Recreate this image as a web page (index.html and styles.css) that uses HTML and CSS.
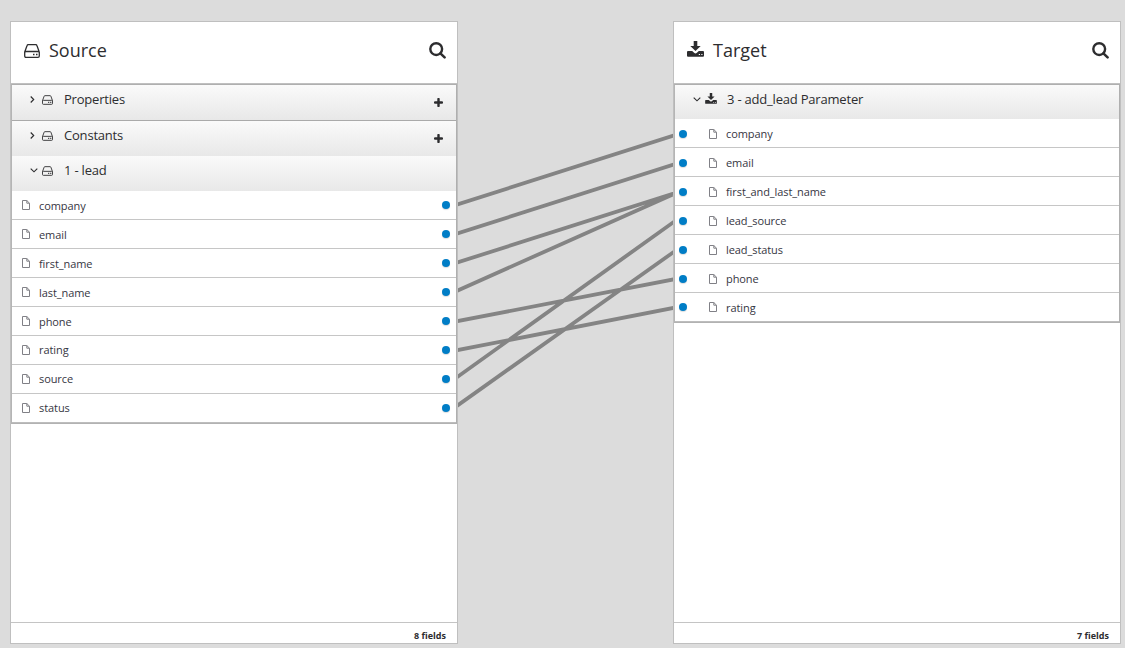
FILE: index.html
```html
<!DOCTYPE html>
<html lang="en">
<head>
<meta charset="utf-8">
<title>Data Mapper</title>
<link rel="stylesheet" href="styles.css">
</head>
<body>
<svg class="defs" aria-hidden="true">
  <symbol id="hdd" viewBox="0 0 16 14"><path d="M.7 8 3 1.700Q3.300.700 4.300.700h7.400q1 0 1.300 1L15.300 8v4q0 1.300-1.300 1.300H2Q.700 13.300.700 12zM.700 8.100Q1 7.500 2 7.500H14q1 0 1.300.600" fill="none" stroke="currentColor" stroke-width="1.300"/><path d="M9 9.700h1.500v1.500H9zM12 9.700h1.500v1.500H12z" fill="currentColor"/></symbol>
  <symbol id="import" viewBox="0 0 17 16"><path d="M6.700 0h3.600v5h3.400L8.500 10 3.300 5h3.400z" fill="currentColor"/><path fill-rule="evenodd" d="M1 10h4.200l2.200 2q1.100.900 2.200 0l2.200-2H16q1 0 1 1v3.800q0 .900-1 .900H1q-1 0-1-.900V11q0-1 1-1zm10.800 3v1h1.200v-1zm2.500 0v1h1.200v-1z" fill="currentColor"/></symbol>
  <symbol id="search" viewBox="0 0 17 17"><circle cx="7.200" cy="7.100" r="5.900" fill="none" stroke="currentColor" stroke-width="2.400"/><path d="m11.400 11.300 4.200 4.100" stroke="currentColor" stroke-width="2.500" stroke-linecap="round"/></symbol>
  <symbol id="file" viewBox="0 0 8 10"><path d="M.500.500h4.300L7.500 3.200v6.300h-7zM4.800.500v2.700h2.700" fill="none" stroke="currentColor"/></symbol>
  <symbol id="plus" viewBox="0 0 9 9"><path d="M4.500 1v7M1 4.500h7" stroke="currentColor" stroke-width="2.400" stroke-linecap="round"/></symbol>
  <symbol id="right" viewBox="0 0 5 7"><path d="m.700.500 3 3-3 3" fill="none" stroke="currentColor" stroke-width="1.150"/></symbol>
  <symbol id="down" viewBox="0 0 8 5"><path d="m.700.700 3.300 3.100L7.300.700" fill="none" stroke="currentColor" stroke-width="1.150"/></symbol>
</svg>
<main class="mapper">
  <section class="panel">
    <header class="head"><svg class="head-icon hdd"><use href="#hdd"/></svg><h2>Source</h2><svg class="search"><use href="#search"/></svg></header>
    <div class="content"><div class="tree">
      <div class="group ruled"><svg class="right"><use href="#right"/></svg><svg class="hdd"><use href="#hdd"/></svg><span>Properties</span><svg class="plus"><use href="#plus"/></svg></div>
      <div class="group"><svg class="right"><use href="#right"/></svg><svg class="hdd"><use href="#hdd"/></svg><span>Constants</span><svg class="plus"><use href="#plus"/></svg></div>
      <div class="group lead"><svg class="down"><use href="#down"/></svg><svg class="hdd"><use href="#hdd"/></svg><span>1 - lead</span></div>
      <div class="field"><svg class="file"><use href="#file"/></svg><span>company</span><i class="dot"></i></div>
      <div class="field"><svg class="file"><use href="#file"/></svg><span>email</span><i class="dot"></i></div>
      <div class="field"><svg class="file"><use href="#file"/></svg><span>first_name</span><i class="dot"></i></div>
      <div class="field"><svg class="file"><use href="#file"/></svg><span>last_name</span><i class="dot"></i></div>
      <div class="field"><svg class="file"><use href="#file"/></svg><span>phone</span><i class="dot"></i></div>
      <div class="field raised"><svg class="file"><use href="#file"/></svg><span>rating</span><i class="dot"></i></div>
      <div class="field raised"><svg class="file"><use href="#file"/></svg><span>source</span><i class="dot"></i></div>
      <div class="field raised"><svg class="file"><use href="#file"/></svg><span>status</span><i class="dot"></i></div>
    </div></div>
    <footer>8 fields</footer>
  </section>
  <svg class="links" viewBox="458 21 215 623">
    <path d="M446 208.100 683 132.600M446 237.100 683 161.600M446 266.100 683 190.500M446 295.700 683 189.900M446 323.300 683 277.600M446 352.300 683 306.100M446 385.100 683 215.300M446 413.600 683 245.400"/>
  </svg>
  <section class="panel target">
    <header class="head"><svg class="head-icon import"><use href="#import"/></svg><h2>Target</h2><svg class="search"><use href="#search"/></svg></header>
    <div class="content"><div class="tree">
      <div class="group"><svg class="down"><use href="#down"/></svg><svg class="import"><use href="#import"/></svg><span>3 - add_lead Parameter</span></div>
      <div class="field"><i class="dot"></i><svg class="file"><use href="#file"/></svg><span>company</span></div>
      <div class="field"><i class="dot"></i><svg class="file"><use href="#file"/></svg><span>email</span></div>
      <div class="field"><i class="dot"></i><svg class="file"><use href="#file"/></svg><span>first_and_last_name</span></div>
      <div class="field"><i class="dot"></i><svg class="file"><use href="#file"/></svg><span>lead_source</span></div>
      <div class="field"><i class="dot"></i><svg class="file"><use href="#file"/></svg><span>lead_status</span></div>
      <div class="field"><i class="dot"></i><svg class="file"><use href="#file"/></svg><span>phone</span></div>
      <div class="field"><i class="dot"></i><svg class="file"><use href="#file"/></svg><span>rating</span></div>
    </div></div>
    <footer>7 fields</footer>
  </section>
</main>
</body>
</html>
```
FILE: styles.css
```css
* { box-sizing: border-box; }
body { margin: 0; background: #dcdcdc; color: #2d2d2f; font-family: "Open Sans", sans-serif; overflow: hidden; }
.defs { display: block; width: 0; height: 0; }
svg { display: block; flex: none; }
.mapper { display: flex; height: 648px; padding: 21px 4px 4px 10px; }
.panel { display: flex; flex-direction: column; width: 448px; height: 623px; background: #fff; border: 1px solid #bfbfbf; }
.head { display: flex; align-items: center; height: 62px; padding: 0 11px 4px 13px; border-bottom: 1px solid #c0c0c0; }
.head-icon.hdd { width: 16px; height: 14px; }
.head-icon.import { width: 17px; height: 16px; margin-bottom: 3px; }
h2 { margin: 0 auto 2px 9px; font-size: 18px; line-height: 24px; font-weight: 400; }
.search { width: 17px; height: 17px; }
.content { flex: 1; }
.tree { border: 1px solid #afafaf; border-left-color: #b5b5b5; border-bottom-color: #b2b2b2; }
.group { display: flex; align-items: flex-start; height: 35px; padding: 4px 13px 0 18px; font-size: 13px; line-height: 20px; letter-spacing: -.2px; background: linear-gradient(#fafafa, #e8e8e8); }
.group.ruled { height: 36px; border-bottom: 1px solid #aaa; }
.right { width: 5px; height: 7px; margin: 7px 7px 0 0; }
.down { width: 8px; height: 5px; margin: 8px 4px 0 0; }
.group .hdd { width: 11px; height: 10px; margin: 6px 11px 0 0; }
.group .plus { width: 9px; height: 9px; margin: 9px 0 0 auto; }
.field { display: flex; align-items: center; height: 29px; padding: 0 6px 0 10px; border-bottom: 1px solid #c6c6c6; color: #36363f; font-size: 11px; line-height: 20px; letter-spacing: -.08px; }
.field:last-child { border-bottom-color: #bdbdbd; }
.field span { padding-top: 1px; }
.field.raised span { padding: 0 0 1px; }
.file { width: 8px; height: 10px; margin-right: 9px; color: #808086; }
.dot { width: 8px; height: 8px; border-radius: 50%; background: #007dc6; box-shadow: 0 1px 1px #ddd; }
.panel:first-child .dot { margin-left: auto; }
.links { width: 215px; height: 623px; }
.links path { stroke: #848484; stroke-width: 3.800px; }
.target .group { height: 34px; }
.target .group .import { width: 12px; height: 11px; margin: 4px 10px 0 0; }
.target .field { padding-left: 4px; }
.target .field:not(:last-child) { padding-top: 1px; }
.target .file { margin-left: 22px; }
footer { height: 21px; padding: 5px 11px 0 0; border-top: 1px solid #c4c4c4; text-align: right; font-size: 9px; font-weight: 700; line-height: 15px; }
```
